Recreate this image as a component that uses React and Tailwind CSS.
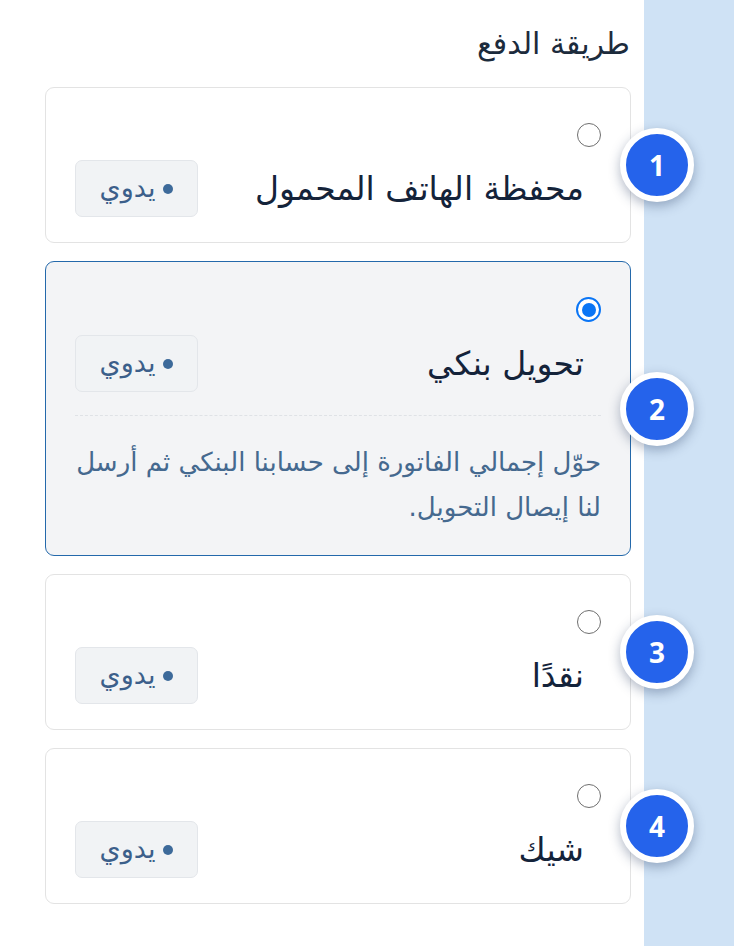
import { useState } from 'react';

const methods = [
  { id: 'wallet', label: 'محفظة الهاتف المحمول' },
  {
    id: 'bank',
    label: 'تحويل بنكي',
    note: 'حوّل إجمالي الفاتورة إلى حسابنا البنكي ثم أرسل لنا إيصال التحويل.',
  },
  { id: 'cash', label: 'نقدًا' },
  { id: 'cheque', label: 'شيك' },
];

const Radio = ({ checked }) =>
  checked ? (
    <span className="flex h-[25px] w-[25px] items-center justify-center rounded-full border-[2.5px] border-[#0a75f5] bg-white">
      <span className="h-[14px] w-[14px] rounded-full bg-[#0a75f5]" />
    </span>
  ) : (
    <span className="block h-[24px] w-[24px] rounded-full border-[1.5px] border-[#6f6f6f] bg-white" />
  );

const Marker = ({ n }) => (
  <span className="absolute right-[-64px] top-1/2 z-10 flex h-[74px] w-[74px] -translate-y-1/2 items-center justify-center rounded-full border-[6px] border-white bg-[#2563eb] text-[28px] font-bold text-white shadow-[0_4px_12px_rgba(30,50,90,0.35)] [font-family:'Open_Sans',sans-serif]">
    {n}
  </span>
);

export default function App() {
  const [selected, setSelected] = useState('bank');

  return (
    <div className="flex min-h-[946px] w-[734px] bg-white">
      <div
        dir="rtl"
        className="flex w-[644px] flex-col pl-[45px] pr-[13px] pt-[26px] [font-family:'DejaVu_Sans','Noto_Sans',sans-serif]"
      >
        <h2 className="mb-[25px] pr-[1px] text-[30px] font-normal leading-[36px] text-[#1c2b3c]">طريقة الدفع</h2>
        <div className="flex flex-col gap-[18px]">
          {methods.map((m, i) => {
            const active = selected === m.id;
            return (
              <div
                key={m.id}
                onClick={() => setSelected(m.id)}
                className={`relative cursor-pointer rounded-[9px] border px-[29px] pb-[25px] pt-[35px] ${
                  active ? 'border-[#2469ab] bg-[#f3f4f6]' : 'border-[#e3e3e3] bg-white'
                }`}
              >
                <div className="flex">
                  <Radio checked={active} />
                </div>
                <div className="mt-[13px] flex items-center justify-between">
                  <span className="pr-[17px] text-[33px] leading-[40px] text-[#14233a]">{m.label}</span>
                  <span className="flex h-[57px] w-[123px] items-center justify-center gap-[8px] rounded-[7px] border border-[#e3e6ea] bg-[#f1f3f5] text-[27px] text-[#3c5f8a]">
                    <span className="h-[10px] w-[10px] rounded-full bg-[#3d6a9a]" />
                    يدوي
                  </span>
                </div>
                {m.note && (
                  <>
                    <div className="mt-[23px] border-t border-dashed border-[#dfe2e6]" />
                    <p className="mt-[24px] text-[26px] leading-[45px] text-[#45698f]">{m.note}</p>
                  </>
                )}
                <Marker n={i + 1} />
              </div>
            );
          })}
        </div>
      </div>
      <div className="flex-1 bg-[#cfe2f5]" />
    </div>
  );
}
